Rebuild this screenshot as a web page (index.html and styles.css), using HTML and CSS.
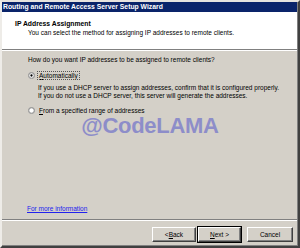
FILE: index.html
```html
<!DOCTYPE html>
<html>
<head>
<meta charset="utf-8">
<link rel="stylesheet" href="styles.css">
</head>
<body>
<div class="window">
  <div class="titlebar">Routing and Remote Access Server Setup Wizard</div>
  <div class="header">
    <div class="h-title">IP Address Assignment</div>
    <div class="h-sub">You can select the method for assigning IP addresses to remote clients.</div>
  </div>
  <div class="content">
    <div class="question">How do you want IP addresses to be assigned to remote clients?</div>
    <div class="radio-row first">
      <svg class="radio" width="7" height="7" viewBox="0 0 12 12"><circle cx="6" cy="6" r="5.5" fill="#fff" stroke="#808080"/><circle cx="6" cy="6" r="4.5" fill="#fff" stroke="#404040" stroke-width="0.8"/><circle cx="6" cy="6" r="2" fill="#000"/></svg>
      <span class="label focus"><u>A</u>utomatically</span>
    </div>
    <div class="desc">
      <div>If you use a DHCP server to assign addresses, confirm that it is configured properly.</div>
      <div>If you do not use a DHCP server, this server will generate the addresses.</div>
    </div>
    <div class="radio-row second">
      <svg class="radio" width="7" height="7" viewBox="0 0 12 12"><circle cx="6" cy="6" r="5.5" fill="#fff" stroke="#808080"/><circle cx="6" cy="6" r="4.5" fill="#fff" stroke="#404040" stroke-width="0.8"/></svg>
      <span class="label"><u>F</u>rom a specified range of addresses</span>
    </div>
    <div class="watermark">@CodeLAMA</div>
    <div class="spacer"></div>
    <a class="link" href="#">For more information</a>
  </div>
  <div class="footer">
    <div class="btn">&lt; <u>B</u>ack</div>
    <div class="btn default"><u>N</u>ext &gt;</div>
    <div class="btn cancel">Cancel</div>
  </div>
</div>
</body>
</html>
```
FILE: styles.css
```css
html, body {
  margin: 0;
  padding: 0;
  background: #d4d0c8;
}
.window {
  width: 300px;
  height: 248px;
  box-sizing: border-box;
  border-top: 2px solid #e6e3de;
  border-left: 2px solid #eeece8;
  border-right: 2px solid #404040;
  border-bottom: 2px solid #404040;
  box-shadow: inset -1px -1px 0 #808080;
  display: flex;
  flex-direction: column;
  font-family: "Liberation Sans", Arial, sans-serif;
  font-size: 6.5px;
  color: #000;
  background: #d4d0c8;
}
.titlebar {
  height: 10px;
  line-height: 10px;
  background: #0a246a;
  color: #fff;
  font-weight: bold;
  font-size: 6.8px;
  padding-left: 1px;
  margin-right: 1px;
}
.header {
  background: #fff;
  height: 38px;
  border-bottom: 1px solid #808080;
  box-shadow: 0 1px 0 #fff;
  margin-right: 1px;
  box-sizing: border-box;
  padding-left: 13px;
  padding-top: 8px;
}
.h-title {
  font-weight: bold;
  font-size: 6.8px;
  line-height: 8px;
}
.h-sub {
  padding-left: 13px;
  line-height: 9px;
}
.content {
  flex: 1;
  display: flex;
  flex-direction: column;
  padding-left: 26px;
  padding-top: 6px;
  line-height: 8px;
}
.question {
  height: 8px;
}
.radio-row {
  display: flex;
  align-items: center;
  gap: 3px;
  height: 8px;
}
.radio-row.first {
  margin-top: 7px;
}
.radio-row.second {
  margin-top: 6px;
}
.radio {
  flex: none;
}
.label {
  line-height: 7px;
  padding: 0 1px;
}
.label.focus {
  outline: 1px dotted #555;
}
.desc {
  margin-top: 5px;
  padding-left: 10px;
}
.watermark {
  font-size: 22px;
  line-height: 24px;
  color: #8d8dc9;
  text-align: center;
  margin-left: -26px;
  margin-top: 0;
  font-weight: bold;
  letter-spacing: -0.3px;
}
.spacer {
  flex: 1;
}
.link {
  color: #2222ee;
  text-decoration: underline;
  align-self: flex-start;
  margin-left: -1px;
  margin-bottom: 6px;
}
.footer {
  border-top: 1px solid #808080;
  box-shadow: inset 0 1px 0 #fff;
  height: 27px;
  box-sizing: border-box;
  display: flex;
  align-items: flex-start;
  justify-content: flex-end;
  padding-top: 7px;
  padding-right: 4px;
  margin-right: 1px;
}
.btn {
  width: 44px;
  height: 15px;
  box-sizing: border-box;
  border-top: 1px solid #fff;
  border-left: 1px solid #fff;
  border-right: 1px solid #404040;
  border-bottom: 1px solid #404040;
  box-shadow: inset -1px -1px 0 #808080;
  display: flex;
  align-items: center;
  justify-content: center;
  margin-left: 1px;
}
.btn.default {
  outline: 1px solid #000;
  width: 43px;
  margin-left: 2px;
}
.btn.cancel {
  width: 46px;
  margin-left: 6px;
}
```
